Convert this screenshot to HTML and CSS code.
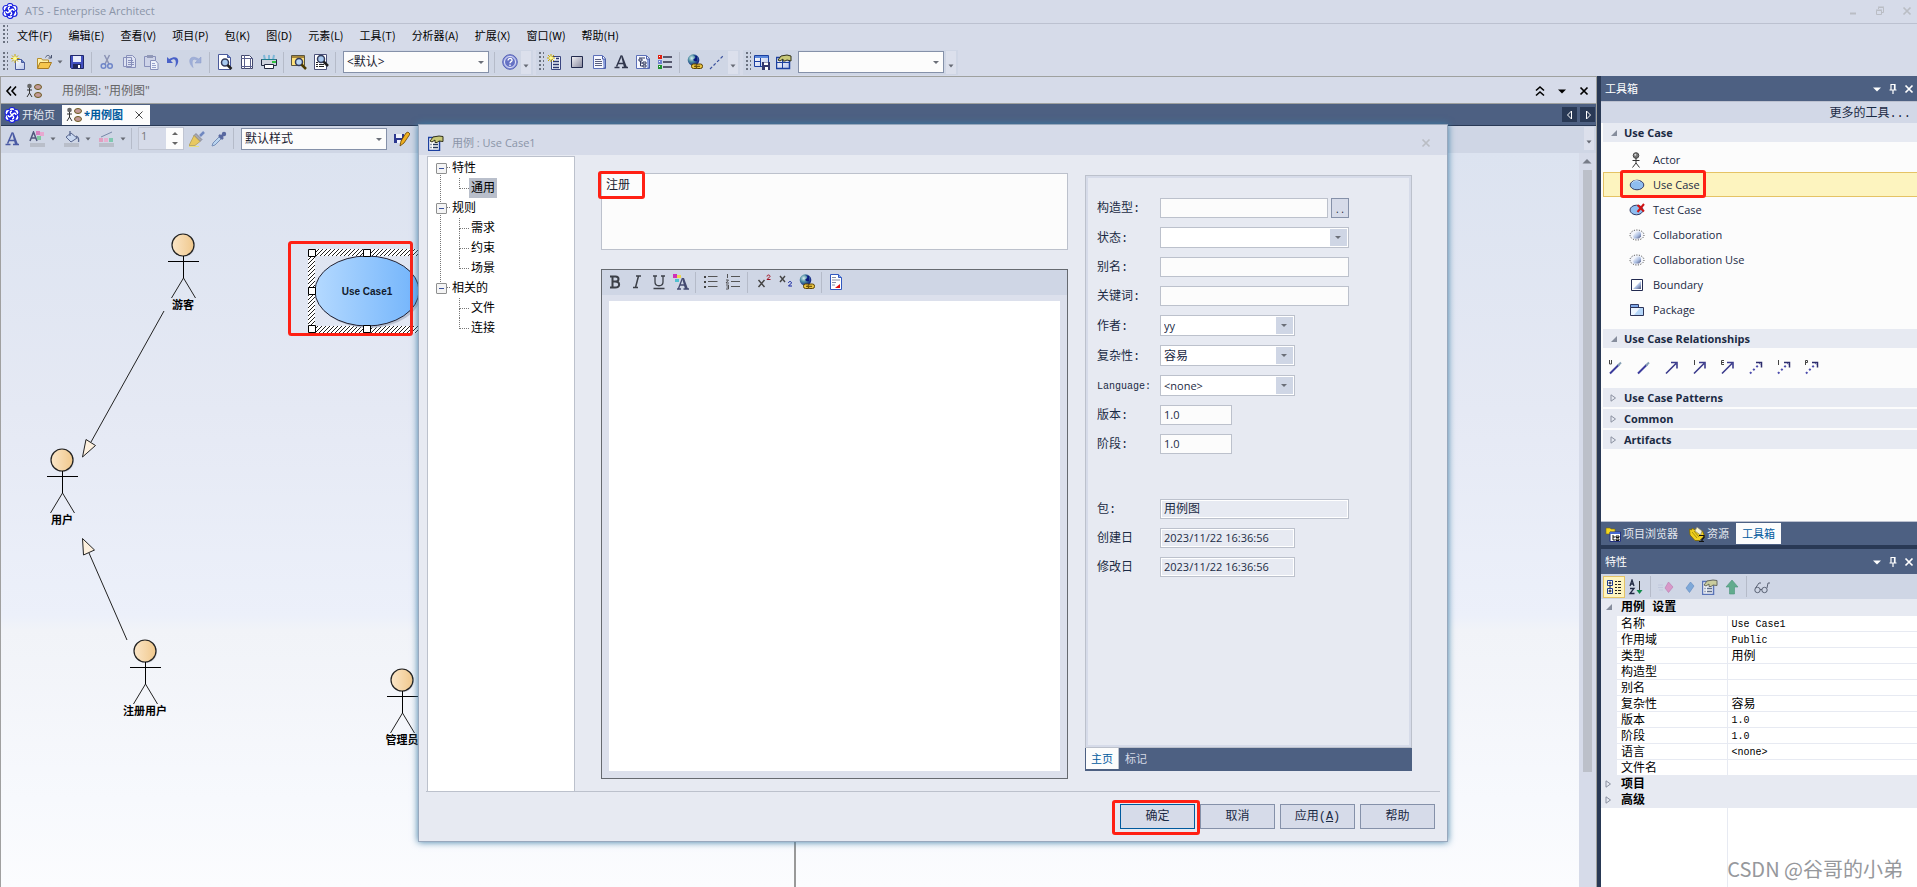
FILE: index.html
```html
<!DOCTYPE html>
<html lang="zh-CN">
<head>
<meta charset="utf-8">
<title>ATS - Enterprise Architect</title>
<link rel="stylesheet" href="styles.css">
</head>
<body>
<svg class="defs" aria-hidden="true">
  <defs>
    <linearGradient id="g-head"><stop offset="0" stop-color="#fbe6c8"/><stop offset="1" stop-color="#f0c88c"/></linearGradient>
    <linearGradient id="g-case"><stop offset="0" stop-color="#b4d9ff"/><stop offset="1" stop-color="#72b4fb"/></linearGradient>
    <linearGradient id="g-box" x2="1" y2="1"><stop offset="0" stop-color="#fff"/><stop offset="1" stop-color="#b9c6ea"/></linearGradient>
    <linearGradient id="g-grey" x2="1" y2="1"><stop offset="0" stop-color="#f4f4f8"/><stop offset="1" stop-color="#85869a"/></linearGradient>
    <linearGradient id="g-shade" x2="1" y2="1"><stop offset=".2" stop-color="#eef3fc"/><stop offset=".6" stop-color="#a9bce0"/><stop offset="1" stop-color="#4a5078"/></linearGradient>
    <radialGradient id="g-globe" cx=".35" cy=".35" r=".7"><stop offset="0" stop-color="#d8f0f0"/><stop offset=".45" stop-color="#4a8aa0"/><stop offset="1" stop-color="#0a1480"/></radialGradient>
    <pattern id="hatch" width="4" height="4" patternUnits="userSpaceOnUse"><rect width="4" height="4" fill="#fff"/><path d="M-1 1l2-2M0 4L4 0M3 5l2-2" stroke="#222"/></pattern>
  </defs>
  <symbol id="i-logo" viewBox="0 0 16 16"><g fill="#fff" stroke="#1b22e0" stroke-width="1.200"><circle cx="8" cy="3.500" r="3"/><circle cx="4" cy="5.500" r="3"/><circle cx="12" cy="5.500" r="3"/><circle cx="4" cy="10.500" r="3"/><circle cx="12" cy="10.500" r="3"/><circle cx="8" cy="12.500" r="3"/></g><circle cx="8" cy="8" r="5.200" fill="#1b22e0"/><path d="M8 4C5.500 4.300 6 6.500 8 8s2.500 3.700 0 4M4 8C4.300 10.500 6.500 10 8 8s3.700-2.500 4 0" fill="none" stroke="#fff" stroke-width="1.400"/></symbol>
  <symbol id="i-new" viewBox="0 0 16 16"><path d="M4.500 5.500h6l3 3v7h-9z" fill="url(#g-box)" stroke="#4a5a9c"/><path d="M10.500 5.500v3h3" fill="#6a8ad0" stroke="#4a5a9c"/><path d="M4 0v9M-.5 4.500h9M1 1.500l6 6M7 1.500l-6 6" stroke="#c9a800"/><circle cx="4" cy="4.500" r="2" fill="#fffb90"/></symbol>
  <symbol id="i-open" viewBox="0 0 16 16"><path d="M1.500 14V4.500h4l1 1.500h6v2" fill="#fff2a8" stroke="#b48d2e"/><path d="M1.500 14.500L4 8.500h11.500l-3 6z" fill="#f6c64c" stroke="#a87a20"/><path d="M9.500 3.500c1.500-3 4-2.500 5 0M15.500 1v3h-3" fill="none" stroke="#4a5470"/></symbol>
  <symbol id="i-save" viewBox="0 0 16 16"><path d="M1.500 1.500h13v13h-12l-1-1z" fill="#4150c0" stroke="#20286c"/><path d="M4 2h8v6H4z" fill="#e8ecfa"/><path d="M4 10h8v4.500H4z" fill="#20285c"/><path d="M9 11h2v3H9z" fill="#fff"/></symbol>
  <symbol id="i-cut" viewBox="0 0 16 16"><path d="M5.500 1l4.500 9M10.500 1L6 10" stroke="#8b93b4" stroke-width="1.500"/><circle cx="4.500" cy="12" r="2.300" fill="none" stroke="#6f86c8" stroke-width="1.500"/><circle cx="11" cy="12" r="2.300" fill="none" stroke="#6f86c8" stroke-width="1.500"/></symbol>
  <symbol id="i-copy" viewBox="0 0 16 16"><path d="M2.500 3.500h8v9h-8zM5.500 1.500h6l3 3v9h-9z" fill="#dde2f2" stroke="#8890ba"/><path d="M7 6.500h5M7 8.500h6M7 10.500h6" stroke="#8890ba"/></symbol>
  <symbol id="i-paste" viewBox="0 0 16 16"><path d="M1.500 2.500h11v10h-11z" fill="#cdd3e8" stroke="#8890ba"/><path d="M4 1h6v3H4z" fill="#9098b8"/><path d="M7.500 6.500h5l2.500 3v6H7.500z" fill="#eef1fa" stroke="#8890ba"/><path d="M9 9.500h3M9 11.500h4M9 13.500h4" stroke="#98a2cc"/></symbol>
  <symbol id="i-undo" viewBox="0 0 16 16"><path d="M2 3v6h6L5.800 6.800C9 3.500 12.500 5.500 10 13.500 16 8 13.500-.5 4.200 5z" fill="#4a62c8"/></symbol>
  <symbol id="i-redo" viewBox="0 0 16 16"><path d="M14 3v6H8l2.200-2.200C7 3.500 3.500 5.500 6 13.500 0 8 2.500-.5 11.800 5z" fill="#a0b0d8" stroke="#8a9aca" stroke-width=".5"/></symbol>
  <symbol id="i-preview" viewBox="0 0 16 16"><path d="M1.500.5h9l3 3v12h-12z" fill="#fff" stroke="#4a5a9c"/><path d="M10.500.5v3h3" fill="#6a8ad0" stroke="#4a5a9c"/><circle cx="8" cy="8.500" r="3.500" fill="#a9cbf0" stroke="#333b5c" stroke-width="1.500"/><path d="M10.500 11l4 4" stroke="#222" stroke-width="2.500"/></symbol>
  <symbol id="i-page" viewBox="0 0 16 16"><path d="M2.500 1.500h8l3 3v10h-11z" fill="#fff" stroke="#42486c"/><path d="M5.500 1v14M2 4.500h12M11.500 4v11M2 12.500h12" stroke="#5a608c"/></symbol>
  <symbol id="i-print" viewBox="0 0 16 16"><path d="M4 6L3 1M8 6V1M12 6l1-5" stroke="#7fb8d8" stroke-width="2"/><path d="M.5 5.500h15v6H.5z" fill="#cfd4de" stroke="#222a40"/><path d="M3.500 10.500h9v4h-9z" fill="#fff" stroke="#222a40"/><path d="M11 7h4v2h-4z" fill="#30c040"/><path d="M1 5.500h14" stroke="#208090"/></symbol>
  <symbol id="i-findbox" viewBox="0 0 16 16"><path d="M.5 1.500h13v10H.5z" fill="#ffe27a" stroke="#5a5440"/><path d="M1 2h12v2H1z" fill="#a8883a"/><circle cx="8" cy="8" r="3.500" fill="#b9d6f4" stroke="#333b5c" stroke-width="1.500"/><path d="M10.500 10.500l4.500 4.500" stroke="#4a3a00" stroke-width="2.500"/></symbol>
  <symbol id="i-finddoc" viewBox="0 0 16 16"><path d="M1.500.5h12v15h-12z" fill="#fff" stroke="#4a5078"/><path d="M3 10.500h2M6 10.500h5M3 12.500h2M6 12.500h5M3 8.500h2" stroke="#222"/><circle cx="8" cy="5" r="3.500" fill="#a9cbf0" stroke="#333b5c" stroke-width="1.500"/><path d="M10.500 7.500l4.500 4.500" stroke="#222" stroke-width="2.500"/></symbol>
  <symbol id="i-help" viewBox="0 0 16 16"><circle cx="8" cy="8" r="7.300" fill="#8c97dc" stroke="#5560b4"/><circle cx="8" cy="8" r="5.500" fill="#6672c4" stroke="#e3e7fa"/><path d="M6 6.500c0-3 4.500-2.500 4 0-.3 1.200-2 1.200-2 2.700M8 10.500v1.500" fill="none" stroke="#fff" stroke-width="1.300"/></symbol>
  <symbol id="i-newlist" viewBox="0 0 16 16"><path d="M4.500 2.500h9v13h-9z" fill="#eef1fb" stroke="#3a4680"/><path d="M9 4.500h3M6 7.500h6M6 10.500h6M6 13.500h6" stroke="#2c3870" stroke-width="1.500"/><path d="M4 0v8M0 4h8M1 1l6 6M7 1L1 7" stroke="#c9a800"/><circle cx="4" cy="4" r="1.800" fill="#fffb90"/></symbol>
  <symbol id="i-square" viewBox="0 0 16 16"><path d="M2.500 2.500h11v11h-11z" fill="url(#g-grey)" stroke="#222a4c"/></symbol>
  <symbol id="i-doc" viewBox="0 0 16 16"><path d="M2.500 1.500h9l3 3v10h-12z" fill="#f6f8ff" stroke="#5b6fb8"/><path d="M11.500 2v3h3v9h-2" fill="#8ca0dc" stroke="#4a5ea8"/><path d="M4 5.500h6M4 7.500h7M4 9.500h7M4 11.500h7" stroke="#5a6080"/></symbol>
  <symbol id="i-a" viewBox="0 0 16 16"><path d="M8.300 1.500L3.600 12.500M5 9.500h5.500M1.500 13.500h5M9 13.500h6" fill="none" stroke="#30364c" stroke-width="1.500"/><path d="M8 1.500h1.500l4.500 12h-3z" fill="#30364c"/></symbol>
  <symbol id="i-abig" viewBox="0 0 16 16"><path d="M8.300 1.500L3.600 12.500M5 9.500h5.500M1.500 13.500h5M9 13.500h6" fill="none" stroke="#4a5aa4" stroke-width="1.500"/><path d="M8 1.500h1.500l4.500 12h-3z" fill="#4a5aa4"/></symbol>
  <symbol id="i-tree" viewBox="0 0 16 16"><path d="M1.500 1.500h10l3 3v10h-13z" fill="#f6f8ff" stroke="#5b6fb8"/><path d="M11.500 2v3h3v9h-2" fill="#8ca0dc" stroke="#4a5ea8"/><path d="M4 5h3v2H4zM8 8h3v2H8zM8 11h3v2H8zM5.500 7v5H8M5.500 9H8M4 4h6" fill="none" stroke="#333a60"/></symbol>
  <symbol id="i-legend" viewBox="0 0 16 16"><path d="M1 1h4v4H1z" fill="#e02010"/><path d="M1 6h4v4H1z" fill="#7080d0"/><path d="M1 11h4v4H1z" fill="#209030"/><path d="M2 2h1v1H2zM2 7h1v1H2zM2 12h1v1H2z" fill="#fff"/><path d="M6 3h9M6 8h9M6 13h9" stroke="#303048" stroke-width="1.500"/></symbol>
  <symbol id="i-globe" viewBox="0 0 16 16"><circle cx="6.500" cy="6" r="5.800" fill="url(#g-globe)"/><path d="M6 1c3 1 3 3 1 4s1 3 3 2V2z" fill="#0a1880"/><rect x="4.500" y="10" width="6.500" height="4.500" rx="2" fill="#e9c240" stroke="#5c4300"/><rect x="9" y="10" width="6.500" height="4.500" rx="2" fill="#e9c240" stroke="#5c4300"/><path d="M7 12.300h6" stroke="#5c4300"/></symbol>
  <symbol id="i-dash" viewBox="0 0 16 16"><path d="M1 15L15 1" stroke="#39509c" stroke-width="1.200" stroke-dasharray="3 2"/></symbol>
  <symbol id="i-winsave" viewBox="0 0 16 16"><path d="M.5 1.500h14v11H.5z" fill="url(#g-box)" stroke="#1c40a0"/><path d="M1 2h13v2H1z" fill="#5b88dc"/><path d="M6.500 4v9M1 7.500h5" stroke="#1c40a0"/><path d="M8 8h8v8H8z" fill="#34386c"/><path d="M10 8.500h4V11h-4zM11 13h3v3h-3z" fill="#fff"/></symbol>
  <symbol id="i-winhand" viewBox="0 0 16 16"><path d="M.5 3.500h13v11H.5z" fill="url(#g-box)" stroke="#1c40a0" stroke-width="1.500"/><path d="M6.500 6v8M1 8.500h12" stroke="#1c40a0"/><path d="M2 6l3-4 6-1 4 1v5l-4-1-2 1H7V5L4 7z" fill="#c8c878" stroke="#30301a"/></symbol>
  <symbol id="i-prop" viewBox="0 0 16 16"><path d="M.5 2.500h11v13H.5z" fill="#fff" stroke="#1c40a0" stroke-width="1.500"/><path d="M2.500 9.500h1M5 9.500h5M2.500 12.500h1M5 12.500h5" stroke="#24385c" stroke-width="1.500"/><path d="M2 6l3-4 6-1 4 .5v5L11 6 9 7.500H7V5L4 7z" fill="#c8c878" stroke="#30301a"/></symbol>
  <symbol id="i-diagram" viewBox="0 0 16 16"><circle cx="3.500" cy="3" r="2.300" fill="#666"/><path d="M3.500 5v5M1 7h5M3.500 10L1 14M3.500 10L6 14" fill="none" stroke="#333"/><ellipse cx="12" cy="4" rx="3.500" ry="2.500" fill="#c49a98" stroke="#6b5a20"/><ellipse cx="12" cy="12" rx="3.500" ry="2.500" fill="#c49a98" stroke="#6b5a20"/></symbol>
  <symbol id="i-actor" viewBox="0 0 16 16"><circle cx="7" cy="3.500" r="2.800" fill="#777" stroke="#444"/><circle cx="6.300" cy="2.800" r="1" fill="#ddd"/><path d="M7 6v5M3.500 8.500h7M7 11l-3.500 4.500M7 11l3.500 4.500" fill="none" stroke="#333"/></symbol>
  <symbol id="i-case" viewBox="0 0 16 16"><ellipse cx="8" cy="8" rx="6.800" ry="4.800" fill="#8fbdf0" stroke="#333c66"/><path d="M3 6c2-3 6-3 8-1" fill="none" stroke="#cde3fb"/></symbol>
  <symbol id="i-test" viewBox="0 0 16 16"><ellipse cx="7.500" cy="8" rx="6.500" ry="4.800" fill="#8fbdf0" stroke="#333c66"/><path d="M8.500 3l6.500 6.500M15 2L8.500 10" stroke="#d01414" stroke-width="2"/></symbol>
  <symbol id="i-collab" viewBox="0 0 16 16"><ellipse cx="8" cy="8" rx="7" ry="5" fill="#f3f5fb" stroke="#333" stroke-dasharray="1 1.500"/><path d="M7 4.500h4l1 2v3l-2 2H5L4 9z" fill="url(#g-shade)"/></symbol>
  <symbol id="i-bound" viewBox="0 0 16 16"><path d="M2.500 2.500h11v11h-11z" fill="#fff" stroke="#222a50"/><path d="M4 12l8-8v8z" fill="url(#g-shade)"/></symbol>
  <symbol id="i-pack" viewBox="0 0 16 16"><path d="M1.500 2.500h8v3h-8z" fill="#7fa8e8" stroke="#333c66"/><path d="M1.500 5.500h13v8h-13z" fill="#b5d6f8" stroke="#2c3358"/><path d="M2 6h9l-6 7H2z" fill="#eef6ff"/></symbol>
  <symbol id="i-line" viewBox="0 0 16 16"><path d="M2 14.500l9-9" stroke="#3c3c9c" stroke-width="2"/><path d="M10 6.500l3-3" stroke="#86a0b4" stroke-width="2"/></symbol>
  <symbol id="i-arrow" viewBox="0 0 16 16"><path d="M2 14.500L12 4.500M7 3.500h6v6" fill="none" stroke="#3c3c8c" stroke-width="1.600"/></symbol>
  <symbol id="i-darrow" viewBox="0 0 16 16"><path d="M2 14.500L12 4.500" stroke="#4c4cac" stroke-width="2" stroke-dasharray="2 2.500"/><path d="M8 3.500h5.500v5" fill="none" stroke="#2c2c6c" stroke-width="1.500"/></symbol>
  <symbol id="i-u" viewBox="0 0 16 16"><path d="M1.500 1v4h2V1" fill="none" stroke="#444"/></symbol>
  <symbol id="i-i" viewBox="0 0 16 16"><path d="M2.500 1v5" stroke="#444"/></symbol>
  <symbol id="i-e" viewBox="0 0 16 16"><path d="M4 1.500H1.500v4H4M1.500 3.500H4" fill="none" stroke="#444"/></symbol>
  <symbol id="i-p" viewBox="0 0 16 16"><path d="M1.500 6V1.500h2v2h-2" fill="none" stroke="#444"/></symbol>
  <symbol id="i-down" viewBox="0 0 16 16"><path d="M4 6.500h8L8 10.500z" fill="currentColor"/></symbol>
  <symbol id="i-small" viewBox="0 0 16 16"><path d="M5.500 6.500h5L8 9.500z" fill="#666a74"/></symbol>
  <symbol id="i-pin" viewBox="0 0 16 16"><path d="M6 9V3.500h4V9M9.500 3v6M4.500 9h7M8 9v4" fill="none" stroke="currentColor" stroke-width="1.200"/></symbol>
  <symbol id="i-x" viewBox="0 0 16 16"><path d="M4.500 4.500l7 7M11.500 4.500l-7 7" stroke="currentColor" stroke-width="1.700"/></symbol>
  <symbol id="i-restore" viewBox="0 0 16 16"><path d="M6.500 6V4.500h5v5H10M6 4h6M4.500 7.500h5v4h-5zM4 7h6" fill="none" stroke="currentColor"/></symbol>
  <symbol id="i-left2" viewBox="0 0 16 16"><path d="M7 3.500L3 8l4 4.500M12 3.500L8 8l4 4.500" fill="none" stroke="#000" stroke-width="1.600"/></symbol>
  <symbol id="i-up2" viewBox="0 0 16 16"><path d="M4 7.500L8 4l4 3.500M4 12.500L8 9l4 3.500" fill="none" stroke="#000" stroke-width="1.600"/></symbol>
  <symbol id="i-fonts" viewBox="0 0 16 16"><path d="M1 10L4.500 1 8 10M2.500 7h4" fill="none" stroke="#50587c" stroke-width="1.500"/><path d="M7 0h4v4H7z" fill="#d880c0"/><path d="M11 1h4v4h-4z" fill="#e8a8d0"/><path d="M8 5h4v4H8z" fill="#80c8a0"/><path d="M1 12h15v4H1z" fill="#b9bec9"/></symbol>
  <symbol id="i-fill" viewBox="0 0 16 16"><path d="M2 6l5-4 6 5-6 4z" fill="#c9d8f0" stroke="#5a6890"/><path d="M6 0v5M12 5c3 1 3 3 2.500 6" fill="none" stroke="#5a6890" stroke-width="1.300"/><path d="M0 12h15v4H0z" fill="#b9bec9"/></symbol>
  <symbol id="i-pen" viewBox="0 0 16 16"><path d="M2 6l11-5" stroke="#7888a8"/><path d="M0 7h4v4H0z" fill="#e0a0c0"/><path d="M5 7h4v4H5z" fill="#e8b0d0"/><path d="M10 7h4v4h-4z" fill="#80c8b0"/><path d="M0 12h15v4H0z" fill="#b9bec9"/></symbol>
  <symbol id="i-brush" viewBox="0 0 16 16"><path d="M15 1l-4 4" stroke="#7088c0" stroke-width="2.500"/><path d="M7 2.500l6 6-2 2-6-6z" fill="#a8a8b0" stroke="#6a6a78" stroke-width=".6"/><path d="M5 4.500l6 6-5 4H0z" fill="#e8c860" stroke="#a89040" stroke-width=".6"/><path d="M0 15.500h10" stroke="#e8e080"/></symbol>
  <symbol id="i-drop" viewBox="0 0 16 16"><path d="M1 15l1-3 6-6 2 2-6 6z" fill="#b9d4f0" stroke="#7890b8"/><path d="M8 4l4 4M10 6l3.500-3.500" stroke="#5868a0" stroke-width="2.500"/><circle cx="13" cy="3" r="2.200" fill="#5868a0"/></symbol>
  <symbol id="i-savepen" viewBox="0 0 16 16"><path d="M0 3h10v9H0z" fill="#2c3890"/><path d="M2 3h6v4H2zM3 9h4v3H3z" fill="#f0f2fa"/><path d="M14 1l2 2-6 9-4 3 1-5 5-8z" fill="#f0b020" stroke="#6a4400" stroke-width=".8"/></symbol>
  <symbol id="i-browser" viewBox="0 0 16 16"><path d="M1 2h4l1 1h4v5H1z" fill="#f4d820" stroke="#7a6a10" stroke-width=".6"/><path d="M5 6h10.500v9.500H5z" fill="#fff" stroke="#223080"/><path d="M5 6h10v2H5z" fill="#4468d0"/><path d="M8 9v5h2M8 11h2M11 10h3v1.500h-3zM11 13h3v1.500h-3z" fill="none" stroke="#111"/></symbol>
  <symbol id="i-res" viewBox="0 0 16 16"><path d="M.5 3l2 1 1-2 2 2 2-2 6 3 2 5-5 4.500H6L1 9z" fill="#f0d020" stroke="#7a6400" stroke-width=".8"/><path d="M8 1l5 4-1.500 4L6 5z" fill="#f6f3d0" stroke="#777" stroke-width=".6"/><path d="M3 6l5 6M5 5l5 6" stroke="#8a7400" stroke-width=".7"/><path d="M10 9.500h5v2l-2 2v2M10 15.500h5" fill="none" stroke="#111" stroke-width="1.200"/></symbol>
  <symbol id="i-cat" viewBox="0 0 16 16"><path d="M1.500 1.500h5v5h-5zM1.500 9.500h5v5h-5z" fill="#fff" stroke="#1c3c90"/><path d="M2.500 4h3M4 2.500v3M2.500 12h3M4 10.500v3M4 7v2" stroke="#111"/><path d="M9 2.500h2M12 2.500h3M9 5.500h2M12 5.500h3M9 8.500h2M12 8.500h3M9 11.500h2M12 11.500h3M9 14.500h2M12 14.500h3" stroke="#222"/></symbol>
  <symbol id="i-az" viewBox="0 0 16 16"><path d="M2 7l2-6 2 6M2.500 5h3M2 9.500h4l-4 5h4.500" fill="none" stroke="#222a44" stroke-width="1.300"/><path d="M11.500 2v10" stroke="#333"/><path d="M8.500 11h6l-3 4z" fill="#108a4a"/></symbol>
  <symbol id="i-pink" viewBox="0 0 16 16"><path d="M0 6h5M0 8.500h5M1 11h4" stroke="#c0c8dc"/><path d="M10.500 3L15 8l-4.500 5.500L7 9z" fill="#d898c8" stroke="#b878b0" stroke-width=".6"/></symbol>
  <symbol id="i-blue" viewBox="0 0 16 16"><path d="M10.500 3L14 7l-4.500 6.500L6 9z" fill="#7ea8d8" stroke="#6088c0" stroke-width=".6"/></symbol>
  <symbol id="i-up" viewBox="0 0 16 16"><path d="M8 1l6 7h-3.500v7h-5V8H2z" fill="#62ab8d" stroke="#4c9378" stroke-width=".6"/></symbol>
  <symbol id="i-glass" viewBox="0 0 16 16"><circle cx="3.500" cy="11" r="2.700" fill="none" stroke="#5a6274"/><circle cx="10.500" cy="11" r="2.700" fill="none" stroke="#5a6274"/><path d="M1.500 9L5 4h2M13 9l1-5h2M6 10.500h2" fill="none" stroke="#5a6274"/></symbol>
  <symbol id="i-b" viewBox="0 0 16 16"><path d="M3 2.500h5.500c4 0 4 5 0 5H6M8 7.500c5.500 0 5.500 6 0 6H3M5.500 2v12" fill="none" stroke="#3c4048" stroke-width="2"/></symbol>
  <symbol id="i-it" viewBox="0 0 16 16"><path d="M7 2h5M9.500 2l-3 11.500M4 13.500h5" fill="none" stroke="#3c4048" stroke-width="1.500"/></symbol>
  <symbol id="i-un" viewBox="0 0 16 16"><path d="M2 2h4M10 2h4M4 2v6c0 5 8 5 8 0V2M2.500 14.500h11" fill="none" stroke="#3c4048" stroke-width="1.300"/></symbol>
  <symbol id="i-colora" viewBox="0 0 16 16"><path d="M0 0h4v4H0z" fill="#d030b8"/><path d="M4 1h4v3H4z" fill="#f0d850"/><path d="M2 5h4v3H2z" fill="#50c0d0"/><path d="M9.500 4L5.500 14.500M7 11h6M4 15h4M10.500 15H16" stroke="#444a70" stroke-width="1.300"/><path d="M9 4h2l4 11h-3z" fill="#444a70"/></symbol>
  <symbol id="i-ul" viewBox="0 0 16 16"><path d="M1 2h2v2H1zM1 7h2v2H1zM1 12h2v2H1z" fill="#444"/><path d="M5 2.500h9.500M5 7.500h9.500M5 12.500h9.500" stroke="#555"/></symbol>
  <symbol id="i-ol" viewBox="0 0 16 16"><path d="M2.500 0v4M1 6h2.500L1 9h3M1 11h2.500v4H1M1.500 13h2" fill="none" stroke="#444" stroke-width=".9"/><path d="M6 2.500h9M6 7.500h9M6 12.500h9" stroke="#555"/></symbol>
  <symbol id="i-sup" viewBox="0 0 16 16"><path d="M3.500 6l6 7M9.500 6l-6 7" stroke="#444" stroke-width="1.400"/><path d="M12 2.500c0-2 3-2 3 0L12 5.500h3.500" fill="none" stroke="#a01020"/></symbol>
  <symbol id="i-sub" viewBox="0 0 16 16"><path d="M3 2l5 6M8 2L3 8" stroke="#444" stroke-width="1.400"/><path d="M11.500 9c0-2 3-2 3 0l-3 3H15" fill="none" stroke="#1020a0"/></symbol>
  <symbol id="i-docred" viewBox="0 0 16 16"><path d="M1.500.5h8l3 3v12h-11z" fill="#fff" stroke="#3058c0"/><path d="M9.500.5v3h3" fill="#8cb0f0" stroke="#3058c0"/><path d="M3 3.500h4M3 6h8M3 8.500h4M3 11h3" stroke="#8890a8"/><path d="M6 14l5-4v4z" fill="#e01010"/></symbol>
  <symbol id="i-open-tri" viewBox="0 0 8 8"><path d="M7 1v6H1z" fill="#868d9c"/></symbol>
  <symbol id="i-shut-tri" viewBox="0 0 8 8"><path d="M1 .8l4.500 3.200L1 7.200z" fill="none" stroke="#8a90a0"/></symbol>
  <symbol id="person" viewBox="0 0 40 60" overflow="visible"><circle cx="21" cy="13" r="11" fill="#c4c9d6" opacity=".7"/><circle cx="20" cy="12" r="11" fill="url(#g-head)" stroke="#222" stroke-width="1.200"/><path d="M20.500 23v22M5 28.500h31" stroke="#000"/><path d="M20.500 45l-12 20M20.500 45l12 20" stroke="#222"/></symbol>
</svg>

<header class="titlebar">
  <svg class="ic"><use href="#i-logo"/></svg>
  <h1>ATS - Enterprise Architect</h1>
  <div class="winbtns">
    <button aria-label="最小化"><svg class="ic"><path d="M5 10.500h6" stroke="currentColor" stroke-width="2"/></svg></button>
    <button aria-label="还原"><svg class="ic"><use href="#i-restore"/></svg></button>
    <button aria-label="关闭"><svg class="ic"><use href="#i-x"/></svg></button>
  </div>
</header>

<nav class="menubar">
  <span class="grip"></span>
  <button>文件(F)</button><button>编辑(E)</button><button>查看(V)</button><button>项目(P)</button><button>包(K)</button><button>图(D)</button><button>元素(L)</button><button>工具(T)</button><button>分析器(A)</button><button>扩展(X)</button><button>窗口(W)</button><button>帮助(H)</button>
</nav>

<div class="toolbars">
  <div class="strip strip-main">
    <span class="grip"></span>
    <button aria-label="新建"><svg class="ic"><use href="#i-new"/></svg></button>
    <button class="split" aria-label="打开"><svg class="ic"><use href="#i-open"/></svg><svg class="ic"><use href="#i-small"/></svg></button>
    <button aria-label="保存"><svg class="ic"><use href="#i-save"/></svg></button>
    <span class="sep"></span>
    <button aria-label="剪切"><svg class="ic"><use href="#i-cut"/></svg></button>
    <button aria-label="复制"><svg class="ic"><use href="#i-copy"/></svg></button>
    <button aria-label="粘贴"><svg class="ic"><use href="#i-paste"/></svg></button>
    <button aria-label="撤销"><svg class="ic"><use href="#i-undo"/></svg></button>
    <button aria-label="重做"><svg class="ic"><use href="#i-redo"/></svg></button>
    <span class="sep"></span>
    <button aria-label="预览"><svg class="ic"><use href="#i-preview"/></svg></button>
    <button aria-label="页面设置"><svg class="ic"><use href="#i-page"/></svg></button>
    <button aria-label="打印"><svg class="ic"><use href="#i-print"/></svg></button>
    <span class="sep"></span>
    <button aria-label="查找"><svg class="ic"><use href="#i-findbox"/></svg></button>
    <button aria-label="在文档中查找"><svg class="ic"><use href="#i-finddoc"/></svg></button>
    <span class="sep"></span>
    <span class="pick"><select aria-label="透视图"><option>&lt;默认&gt;</option></select></span>
    <span class="sep"></span>
    <button aria-label="帮助"><svg class="ic"><use href="#i-help"/></svg></button>
    <button class="more" aria-label="更多按钮"><svg class="ic"><use href="#i-small"/></svg></button>
  </div>
  <div class="strip">
    <span class="grip"></span>
    <button aria-label="新元素"><svg class="ic"><use href="#i-newlist"/></svg></button>
    <button aria-label="边界"><svg class="ic"><use href="#i-square"/></svg></button>
    <button aria-label="注释"><svg class="ic"><use href="#i-doc"/></svg></button>
    <button aria-label="文本"><svg class="ic"><use href="#i-a"/></svg></button>
    <button aria-label="图注"><svg class="ic"><use href="#i-tree"/></svg></button>
    <button aria-label="图例"><svg class="ic"><use href="#i-legend"/></svg></button>
    <span class="sep"></span>
    <button aria-label="超链接"><svg class="ic"><use href="#i-globe"/></svg></button>
    <button aria-label="注释连接"><svg class="ic"><use href="#i-dash"/></svg></button>
    <button class="more" aria-label="更多按钮"><svg class="ic"><use href="#i-small"/></svg></button>
  </div>
  <div class="strip">
    <span class="grip"></span>
    <button aria-label="保存布局"><svg class="ic"><use href="#i-winsave"/></svg></button>
    <button aria-label="管理布局"><svg class="ic"><use href="#i-winhand"/></svg></button>
    <span class="pick"><select aria-label="布局"><option></option></select></span>
    <button class="more" aria-label="更多按钮"><svg class="ic"><use href="#i-small"/></svg></button>
  </div>
</div>

<main class="work">
  <section class="left">
    <div class="caption">
      <svg class="ic"><use href="#i-left2"/></svg>
      <svg class="ic"><use href="#i-diagram"/></svg>
      <h2>用例图: "用例图"</h2>
      <button aria-label="折叠"><svg class="ic"><use href="#i-up2"/></svg></button>
      <button aria-label="菜单"><svg class="ic"><use href="#i-down"/></svg></button>
      <button aria-label="关闭视图"><svg class="ic"><use href="#i-x"/></svg></button>
    </div>
    <div class="tabs">
      <button class="tab"><svg class="ic"><use href="#i-logo"/></svg>开始页</button>
      <button class="tab on"><svg class="ic"><use href="#i-diagram"/></svg>*用例图<svg class="ic tabx"><path d="M4.500 4.500l7 7M11.500 4.500l-7 7" stroke="#444"/></svg></button>
      <span class="grow"></span>
      <button class="nav" aria-label="上一个标签"><svg class="ic"><path d="M9.500 4v8L5.500 8z" fill="none" stroke="#fff"/></svg></button>
      <button class="nav" aria-label="下一个标签"><svg class="ic"><path d="M6.500 4v8l4-4z" fill="none" stroke="#fff"/></svg></button>
    </div>
    <div class="strip fmt">
      <button aria-label="字体"><svg class="ic"><use href="#i-abig"/></svg></button>
      <button class="split" aria-label="字体颜色"><svg class="ic"><use href="#i-fonts"/></svg><svg class="ic"><use href="#i-small"/></svg></button>
      <button class="split" aria-label="填充颜色"><svg class="ic"><use href="#i-fill"/></svg><svg class="ic"><use href="#i-small"/></svg></button>
      <button class="split" aria-label="线条颜色"><svg class="ic"><use href="#i-pen"/></svg><svg class="ic"><use href="#i-small"/></svg></button>
      <span class="sep"></span>
      <span class="spin"><input aria-label="线宽" value="1"><span class="arrows"><i></i><i></i></span></span>
      <button aria-label="格式刷"><svg class="ic"><use href="#i-brush"/></svg></button>
      <button aria-label="取色器"><svg class="ic"><use href="#i-drop"/></svg></button>
      <span class="sep"></span>
      <span class="pick"><select aria-label="样式"><option>默认样式</option></select></span>
      <button class="savestyle" aria-label="保存样式"><svg class="ic"><use href="#i-savepen"/></svg></button>
      <span class="grow"></span>
      <button class="more" aria-label="更多按钮"><svg class="ic"><use href="#i-small"/></svg></button>
    </div>
    <div class="stage">
      <svg class="diagram" role="img" aria-label="用例图">
        <g transform="translate(-1 -153)">
          <use href="#person" x="163" y="233" width="40" height="60"/><text x="183" y="309">游客</text>
          <use href="#person" x="42" y="448" width="40" height="60"/><text x="62" y="524">用户</text>
          <use href="#person" x="125" y="639" width="40" height="60"/><text x="145" y="715">注册用户</text>
          <use href="#person" x="382" y="668" width="40" height="60"/><text x="402" y="744">管理员</text>
          <path d="M164 311L91 442M127 640L89 553" stroke="#222"/>
          <path d="M86 439.500l9.500 6L82.500 457zM82.500 538.500l12 11.500-11 5z" fill="#fdf0de" stroke="#222"/>
          <path d="M308 249h118v84H308zM315 256v70h104v-70z" fill="url(#hatch)" fill-rule="evenodd"/>
          <ellipse cx="369" cy="293" rx="52" ry="35" fill="#b9c0d0"/>
          <ellipse cx="367" cy="291" rx="52" ry="35" fill="url(#g-case)" stroke="#223"/>
          <text class="case" x="367" y="295">Use Case1</text>
          <path d="M308.500 249.500h7v7h-7zM363.500 249.500h7v7h-7zM308.500 287.500h7v7h-7zM308.500 325.500h7v7h-7zM363.500 325.500h7v7h-7z" fill="#fff" stroke="#000"/>
          <path d="M795 780v200" stroke="#999" stroke-width="2"/>
          <rect x="289.500" y="242.500" width="122" height="92" rx="2" fill="none" stroke="#ff2014" stroke-width="3"/>
        </g>
      </svg>
      <div class="scroll"><svg class="ic"><path d="M3.500 10.500h9L8 6z" fill="#777c88"/></svg><span class="thumb"></span></div>
    </div>
  </section>

  <aside class="right">
    <section class="panel toolbox">
      <header class="head"><h2>工具箱</h2><button aria-label="菜单"><svg class="ic"><use href="#i-down"/></svg></button><button aria-label="固定"><svg class="ic"><use href="#i-pin"/></svg></button><button aria-label="关闭工具箱"><svg class="ic"><use href="#i-x"/></svg></button></header>
      <a class="moretools" href="#tools">更多的工具...</a>
      <div class="boxes" id="tools">
        <button class="group"><svg class="tri"><use href="#i-open-tri"/></svg>Use Case</button>
        <ul class="items">
          <li><button><svg class="ic"><use href="#i-actor"/></svg>Actor</button></li>
          <li class="sel"><button><svg class="ic"><use href="#i-case"/></svg>Use Case</button><span class="mark mark-tool"></span></li>
          <li><button><svg class="ic"><use href="#i-test"/></svg>Test Case</button></li>
          <li><button><svg class="ic"><use href="#i-collab"/></svg>Collaboration</button></li>
          <li><button><svg class="ic"><use href="#i-collab"/></svg>Collaboration Use</button></li>
          <li><button><svg class="ic"><use href="#i-bound"/></svg>Boundary</button></li>
          <li><button><svg class="ic"><use href="#i-pack"/></svg>Package</button></li>
        </ul>
        <button class="group"><svg class="tri"><use href="#i-open-tri"/></svg>Use Case Relationships</button>
        <div class="rels">
          <button aria-label="Use"><svg class="ic"><use href="#i-line"/><use href="#i-u"/></svg></button>
          <button aria-label="Associate"><svg class="ic"><use href="#i-line"/></svg></button>
          <button aria-label="Generalize"><svg class="ic"><use href="#i-arrow"/></svg></button>
          <button aria-label="Include"><svg class="ic"><use href="#i-arrow"/><use href="#i-i"/></svg></button>
          <button aria-label="Extend"><svg class="ic"><use href="#i-arrow"/><use href="#i-e"/></svg></button>
          <button aria-label="Realize"><svg class="ic"><use href="#i-darrow"/></svg></button>
          <button aria-label="Invokes"><svg class="ic"><use href="#i-darrow"/><use href="#i-i"/></svg></button>
          <button aria-label="Precedes"><svg class="ic"><use href="#i-darrow"/><use href="#i-p"/></svg></button>
        </div>
        <button class="group"><svg class="tri"><use href="#i-shut-tri"/></svg>Use Case Patterns</button>
        <button class="group"><svg class="tri"><use href="#i-shut-tri"/></svg>Common</button>
        <button class="group"><svg class="tri"><use href="#i-shut-tri"/></svg>Artifacts</button>
      </div>
      <div class="ptabs">
        <button><svg class="ic"><use href="#i-browser"/></svg>项目浏览器</button>
        <button><svg class="ic"><use href="#i-res"/></svg>资源</button>
        <button class="on">工具箱</button>
      </div>
    </section>
    <section class="panel props">
      <header class="head"><h2>特性</h2><button aria-label="菜单"><svg class="ic"><use href="#i-down"/></svg></button><button aria-label="固定"><svg class="ic"><use href="#i-pin"/></svg></button><button aria-label="关闭特性"><svg class="ic"><use href="#i-x"/></svg></button></header>
      <div class="strip ptools">
        <button class="hot" aria-label="分类"><svg class="ic"><use href="#i-cat"/></svg></button>
        <button aria-label="排序"><svg class="ic"><use href="#i-az"/></svg></button>
        <span class="sep"></span>
        <button aria-label="后退"><svg class="ic"><use href="#i-pink"/></svg></button>
        <button aria-label="前进"><svg class="ic"><use href="#i-blue"/></svg></button>
        <button aria-label="属性"><svg class="ic dim"><use href="#i-prop"/></svg></button>
        <button aria-label="上移"><svg class="ic"><use href="#i-up"/></svg></button>
        <span class="sep"></span>
        <button aria-label="查看"><svg class="ic"><use href="#i-glass"/></svg></button>
      </div>
      <div class="sheet">
        <table>
          <colgroup><col class="c0"><col class="c1"><col></colgroup>
          <tbody>
            <tr class="cat"><th><svg class="tri"><use href="#i-open-tri"/></svg></th><th colspan="2">用例 设置</th></tr>
            <tr><th></th><td>名称</td><td>Use Case1</td></tr>
            <tr><th></th><td>作用域</td><td>Public</td></tr>
            <tr><th></th><td>类型</td><td class="cjk">用例</td></tr>
            <tr><th></th><td>构造型</td><td></td></tr>
            <tr><th></th><td>别名</td><td></td></tr>
            <tr><th></th><td>复杂性</td><td class="cjk">容易</td></tr>
            <tr><th></th><td>版本</td><td>1.0</td></tr>
            <tr><th></th><td>阶段</td><td>1.0</td></tr>
            <tr><th></th><td>语言</td><td>&lt;none&gt;</td></tr>
            <tr><th></th><td>文件名</td><td></td></tr>
            <tr class="cat"><th><svg class="tri"><use href="#i-shut-tri"/></svg></th><th colspan="2">项目</th></tr>
            <tr class="cat"><th><svg class="tri"><use href="#i-shut-tri"/></svg></th><th colspan="2">高级</th></tr>
          </tbody>
        </table>
        <div class="rest"></div>
      </div>
    </section>
  </aside>
</main>

<section class="dialog" role="dialog" aria-labelledby="dlg-title">
  <header class="dlg-head">
    <svg class="ic"><use href="#i-prop"/></svg>
    <h2 id="dlg-title">用例 : Use Case1</h2>
    <button aria-label="关闭对话框"><svg class="ic"><use href="#i-x"/></svg></button>
  </header>
  <div class="dlg-body">
    <ul class="tree">
      <li><button>特性</button><ul><li><button class="cur">通用</button></li></ul></li>
      <li><button>规则</button><ul><li><button>需求</button></li><li><button>约束</button></li><li><button>场景</button></li></ul></li>
      <li><button>相关的</button><ul><li><button>文件</button></li><li><button>连接</button></li></ul></li>
    </ul>
    <div class="mid">
      <div class="namebox"><textarea aria-label="名称">注册</textarea><span class="mark mark-name"></span></div>
      <div class="editor">
        <div class="strip edbar">
          <button aria-label="粗体"><svg class="ic"><use href="#i-b"/></svg></button>
          <button aria-label="斜体"><svg class="ic"><use href="#i-it"/></svg></button>
          <button aria-label="下划线"><svg class="ic"><use href="#i-un"/></svg></button>
          <button aria-label="文字颜色"><svg class="ic"><use href="#i-colora"/></svg></button>
          <span class="sep"></span>
          <button aria-label="项目符号"><svg class="ic"><use href="#i-ul"/></svg></button>
          <button aria-label="编号"><svg class="ic"><use href="#i-ol"/></svg></button>
          <span class="sep"></span>
          <button aria-label="上标"><svg class="ic"><use href="#i-sup"/></svg></button>
          <button aria-label="下标"><svg class="ic"><use href="#i-sub"/></svg></button>
          <button aria-label="链接"><svg class="ic"><use href="#i-globe"/></svg></button>
          <span class="sep"></span>
          <button aria-label="词汇表"><svg class="ic"><use href="#i-docred"/></svg></button>
        </div>
        <textarea class="notes" aria-label="注释"></textarea>
      </div>
    </div>
    <div class="side">
      <form class="form">
        <label for="f1">构造型:</label><div class="w-l"><input id="f1"><button type="button" aria-label="选择构造型">. .</button></div>
        <label for="f2">状态:</label><div class="w-l drop"><select id="f2"><option></option></select></div>
        <label for="f3">别名:</label><div class="w-l"><input id="f3"></div>
        <label for="f4">关键词:</label><div class="w-l"><input id="f4"></div>
        <label for="f5">作者:</label><div class="w-m drop"><select id="f5"><option>yy</option></select></div>
        <label for="f6">复杂性:</label><div class="w-m drop"><select id="f6" class="cjk"><option>容易</option></select></div>
        <label for="f7">Language:</label><div class="w-m drop"><select id="f7"><option>&lt;none&gt;</option></select></div>
        <label for="f8">版本:</label><div class="w-s"><input id="f8" value="1.0"></div>
        <label for="f9">阶段:</label><div class="w-s"><input id="f9" value="1.0"></div>
        <label class="apart" for="f10">包:</label><div class="w-l apart"><input id="f10" class="cjk" value="用例图" readonly></div>
        <label for="f11">创建日</label><div class="w-m"><input id="f11" value="2023/11/22 16:36:56" readonly></div>
        <label for="f12">修改日</label><div class="w-m"><input id="f12" value="2023/11/22 16:36:56" readonly></div>
      </form>
      <div class="sidetabs"><button class="on">主页</button><button>标记</button></div>
    </div>
  </div>
  <footer class="dlg-foot">
    <span class="okwrap"><button class="ok">确定</button><span class="mark mark-ok"></span></span>
    <button>取消</button>
    <button>应用(<u>A</u>)</button>
    <button>帮助</button>
  </footer>
</section>
<p class="watermark">CSDN @谷哥的小弟</p>
</body>
</html>
```
FILE: styles.css
```css
* { box-sizing: border-box; }
body {
  margin: 0;
  height: 100vh;
  display: flex;
  flex-direction: column;
  overflow: hidden;
  background: #d6dbe9;
  color: #1b2230;
  font: 12px/16px "Open Sans", "Noto Sans CJK SC", sans-serif;
}
h1, h2, p, ul { margin: 0; padding: 0; }
h1, h2 { font-size: 12px; font-weight: normal; }
ul { list-style: none; }
button, input, select, textarea { font: inherit; color: inherit; margin: 0; padding: 0; border: 0; background: none; border-radius: 0; outline: 0; }
button { display: flex; align-items: center; white-space: nowrap; }
select { appearance: none; }
textarea { resize: none; }
.defs { position: absolute; width: 0; height: 0; }
.ic { width: 16px; height: 16px; flex: none; display: block; }
.tri { width: 8px; height: 8px; flex: none; }
.grow { flex: 1; }

.titlebar { height: 24px; flex: none; display: flex; align-items: center; gap: 7px; padding: 0 2px 2px; border-bottom: 1px solid #bcc1d0; color: #8b95a8; }
.titlebar h1 { flex: 1; font: 11px/16px "Open Sans", sans-serif; }
.winbtns { display: flex; gap: 11px; color: #babdc4; }

.menubar { height: 24px; flex: none; display: flex; align-items: center; gap: 16px; padding: 0 0 2px 3px; color: #000; font-family: "Noto Sans CJK SC", sans-serif; }
.menubar button { font-size: 11px; }
.menubar .grip { margin-right: -7px; }
.grip { width: 5px; height: 20px; flex: none; background: radial-gradient(circle at 1px 1px, #6b7280 1px, transparent 1px) 0 0 / 4px 4px; }

.toolbars { height: 28px; flex: none; display: flex; align-items: center; gap: 3px; }
.strip { height: 25px; display: flex; align-items: center; background: #cfd6e5; }
.toolbars .strip { padding: 0 2px 0 3px; }
.strip button { width: 22px; height: 22px; flex: none; justify-content: center; }
.strip .split { width: 36px; padding-left: 6px; justify-content: flex-start; }
.strip .more { width: 10px; height: 23px; align-items: flex-end; background: #dce0ec; overflow: hidden; }
.sep { width: 1px; height: 21px; margin: 0 4px 0 3px; flex: none; background: #b5bbc9; }
.pick { position: relative; width: 146px; flex: none; margin: 0 2px 0 3px; }
.pick select { display: block; width: 100%; height: 22px; padding: 0 3px; background: #fcfcfc; border: 1px solid #8591a9; }
.pick::after, .drop::after { content: ""; position: absolute; right: 5px; top: 10px; border: 3px solid transparent; border-top-color: #6b6f78; pointer-events: none; }

.work { flex: 1; min-height: 0; display: flex; background: #293955; }
.left { flex: 1; min-width: 0; display: flex; flex-direction: column; border-left: 1px solid #a0a0a0; border-right: 1px solid #a0a19c; margin-right: 4px; background: #d6dbe9; }
.caption { height: 28px; flex: none; display: flex; align-items: center; gap: 6px; padding: 1px 4px 0 3px; border-top: 1px solid #9fa19f; border-bottom: 1px solid #9fa19f; color: #666; }
.caption .ic:nth-child(2) { margin: 0 14px 0 0; }
.caption h2 { flex: 1; }
.caption button { color: #000; }
.tabs { height: 22px; flex: none; display: flex; align-items: flex-end; padding-right: 1px; background: #4d6082; border-bottom: 1px solid #293955; }
.tab { height: 20px; padding: 0 7px 0 3px; gap: 2px; font-size: 11px; color: #e4e8f0; }
.tab.on { padding: 0 3px 0 4px; background: #fcfcfc; color: #005a9e; font-weight: bold; }
.tabx { margin-left: 6px; }
.nav { width: 15px; height: 15px; justify-content: center; align-self: center; margin-left: 3px; background: #293955; }
.fmt { height: 27px; flex: none; padding: 0 2px 2px 0; }
.fmt .split { width: 35px; }
.spin { display: flex; width: 46px; height: 23px; margin: 0 2px; border: 1px solid #c0c5d2; background: #fcfcfc; }
.spin input { width: 27px; padding: 0 2px 6px; background: #d6dbe9; color: #777; font-size: 11px; }
.arrows { flex: 1; display: flex; flex-direction: column; align-items: center; justify-content: center; gap: 7px; }
.arrows i { border: 3px solid transparent; border-top: 0; border-bottom-color: #666; }
.arrows i + i { border-top: 3px solid #666; border-bottom: 0; }
.savestyle { margin-left: 2px; }
.stage { flex: 1; min-height: 0; display: flex; }
.diagram { flex: 1; min-width: 0; height: 100%; background: linear-gradient(#dce3f0, #e5e9f4 35%, #ecf0fa 63%, #f1f3f8 65%, #f7f9fd 88%, #fbfcfe); }
.diagram text { font: bold 11px "Liberation Sans", "Noto Sans CJK SC", sans-serif; text-anchor: middle; fill: #000; }
.diagram .case { font-size: 10px; fill: #111a2c; }
.scroll { width: 17px; padding-right: 1px; display: flex; flex-direction: column; align-items: center; background: #d6dbe9; }
.thumb { width: 9px; height: 82%; margin-top: 1px; background: #bcc0c9; }

.right { width: 316px; flex: none; display: flex; flex-direction: column; gap: 4px; }
.toolbox { height: 469px; flex: none; display: flex; flex-direction: column; }
.props { flex: 1; min-height: 0; display: flex; flex-direction: column; }
.head { height: 25px; flex: none; display: flex; align-items: center; padding: 0 0 0 4px; background: #4d6082; color: #fff; }
.head h2 { flex: 1; font-size: 11px; }
.moretools { height: 22px; flex: none; padding: 4px 6px 0; border-top: 1px solid #bcc1d0; background: #d2d8e7; color: #1b2a44; text-align: right; text-decoration: none; font: 12px/16px "Liberation Mono", "Noto Sans CJK SC", monospace; }
.boxes { flex: 1; min-height: 0; padding-left: 2px; background: #fcfcfc; border-bottom: 1px solid #bcc1d0; }
.group { width: 100%; height: 19px; margin-bottom: 2px; padding: 0 7px; gap: 6px; background: #e7eaf2; color: #1b2a44; font-weight: bold; font-size: 11px; }
.items { padding: 3px 0 7px; }
.items li { position: relative; height: 25px; display: flex; }
.items button { flex: 1; padding-left: 26px; gap: 8px; color: #1b2a44; font-size: 11px; }
.items .sel { background: #fdf4bf; border: 1px solid #e5c365; border-right: 0; }
.items .sel button { padding-left: 25px; }
.mark { position: absolute; border: 3px solid #ff2014; border-radius: 3px; pointer-events: none; }
.mark-tool { left: 16px; top: -3px; width: 86px; height: 28px; }
.rels { height: 38px; display: flex; align-items: center; gap: 12px; padding: 0 0 4px 5px; }
.ptabs { height: 23px; flex: none; display: flex; align-items: center; background: #4d6082; color: #e4e8f0; font-size: 11px; }
.ptabs button { height: 21px; gap: 2px; padding: 0 7px 0 4px; }
.ptabs .on { background: #fcfcfc; color: #005a9e; padding: 0 6px; }
.ptools { flex: none; padding-left: 2px; }
.ptools .hot { background: #fdf4bf; border: 1px solid #e5c365; }
.dim { opacity: .65; }
.sheet { flex: 1; min-height: 0; display: flex; flex-direction: column; background: #fff; font: 12px/13px "Liberation Mono", "Noto Sans CJK SC", monospace; color: #000; }
.sheet table { width: 100%; border-collapse: collapse; table-layout: fixed; }
.c0 { width: 16px; }
.c1 { width: 110px; }
.sheet tr { height: 16px; }
.sheet td, .sheet th { height: 16px; padding: 3px 4px 0; line-height: 12px; text-align: left; border-bottom: 1px solid #e7eaf2; }
.sheet th:first-child { background: #e7eaf2; }
.sheet td + td { border-left: 1px solid #e7eaf2; font-size: 10px; }
.sheet td.cjk { font-size: 12px; }
.sheet .cat { background: #e7eaf2; }
.rest { flex: 1; width: 127px; border-right: 1px solid #e7eaf2; }

.dialog { position: absolute; left: 418px; top: 124px; right: 469px; bottom: 45px; display: flex; flex-direction: column; background: #e7eaf2; border: 1px solid #98a8bd; box-shadow: 0 0 7px #3b7ba4; }
.dlg-head { height: 30px; flex: none; display: flex; align-items: center; gap: 8px; padding: 6px 13px 0 9px; background: #d6dbe9; color: #8b95a8; }
.dlg-head h2 { flex: 1; font-size: 11px; }
.dlg-head button { color: #babdc4; }
.dlg-body { flex: 1; min-height: 0; display: flex; margin: 0 7px; padding-right: 28px; border-bottom: 1px solid #bcc1cc; }
.tree { width: 148px; flex: none; margin: 1px 0 0 1px; padding: 1px 0 0 8px; background: #fff; border: 1px solid #bcc1cc; border-bottom: 0; color: #000; }
.tree li { position: relative; }
.tree button { height: 20px; }
.tree > li > button { padding-left: 16px; }
.tree > li > button::before { content: ""; position: absolute; z-index: 1; left: 0; top: 5px; width: 9px; height: 9px; border: 1px solid #8e8f8f; border-radius: 1px; background: linear-gradient(#39509c, #39509c) center / 5px 1px no-repeat #f4f4f4; }
.tree > li > button::after { content: ""; position: absolute; left: 10px; top: 9px; width: 4px; border-top: 1px dotted #777; }
.tree > li:not(:last-child)::before { content: ""; position: absolute; left: 4px; top: 10px; bottom: -10px; border-left: 1px dotted #777; }
.tree ul { padding-left: 23px; }
.tree ul li { padding-left: 10px; }
.tree ul li::before { content: ""; position: absolute; left: 0; top: 0; width: 9px; height: 10px; border-left: 1px dotted #777; border-bottom: 1px dotted #777; }
.tree ul li:not(:last-child)::after { content: ""; position: absolute; left: 0; top: 10px; height: 10px; border-left: 1px dotted #777; }
.tree ul button { padding: 0 2px; }
.tree .cur { background: #b9bfcb; }
.mid { flex: 1; min-width: 0; display: flex; flex-direction: column; gap: 19px; padding: 18px 17px 12px 26px; }
.namebox { position: relative; height: 77px; flex: none; }
.namebox textarea { width: 100%; height: 100%; padding: 3px 4px; background: #fcfcfc; border: 1px solid #bcc1cc; }
.mark-name { left: -3px; top: -2px; width: 47px; height: 28px; }
.editor { flex: 1; min-height: 0; display: flex; flex-direction: column; background: #dce0ec; border: 1px solid #666a70; }
.edbar { flex: none; padding: 0 0 1px 2px; }
.notes { flex: 1; margin: 6px 7px 7px; background: #fff; }
.side { width: 327px; flex: none; display: flex; flex-direction: column; padding: 20px 0; }
.form { flex: 1; min-height: 0; display: grid; grid-template-columns: 63px 1fr; align-content: start; row-gap: 9px; padding: 22px 11px; border: 1px solid #bcc1cc; box-shadow: inset 0 0 0 2px #d6dbe9; }
.form label { align-self: center; padding-top: 2px; font-family: "Liberation Mono", "Noto Sans CJK SC", monospace; font-size: 12px; white-space: nowrap; color: #1b2a44; }
.form label[for="f7"] { font-size: 10px; }
.form div { position: relative; display: flex; gap: 3px; height: 20px; }
.form .drop { height: 21px; }
.w-l { width: 189px; }
.w-m { width: 135px; }
.w-s { width: 72px; }
.form input, .form select { flex: 1; min-width: 0; padding: 0 3px; background: #fcfcfc; border: 1px solid #bcc1cc; font-size: 11px; color: #1b2a44; }
.form .cjk { font-size: 12px; }
.form input[readonly] { background: #e7eaf2; box-shadow: inset 0 0 0 1px #fff; }
.form .drop select { background: linear-gradient(#cfd6e5, #cfd6e5) right 1px center / 17px 17px no-repeat #fff; }
.drop::after { right: 8px; top: 9px; }
.form button { width: 18px; justify-content: center; align-items: flex-end; background: #d6dbe9; border: 1px solid #8591a9; font-size: 10px; }
.form .apart { margin-top: 36px; }
.sidetabs { height: 23px; flex: none; display: flex; align-items: flex-start; padding-left: 1px; background: #4d6082; color: #d5dae6; font-size: 11px; }
.sidetabs button { height: 21px; padding: 0 6px; }
.sidetabs .on { padding: 0 5px; background: #fcfcfc; color: #005a9e; border-right: 1px solid #bcc1cc; }
.dlg-foot { height: 49px; flex: none; display: flex; justify-content: flex-end; align-items: flex-start; gap: 5px; padding: 12px 12px 0; }
.dlg-foot button { width: 75px; height: 25px; justify-content: center; background: #d6dbe9; border: 1px solid #8591a9; font-family: "Liberation Mono", "Noto Sans CJK SC", monospace; color: #1b2a44; }
.okwrap { position: relative; }
.okwrap .ok { border-color: #005a9e; }
.mark-ok { left: -8px; top: -4px; width: 88px; height: 35px; }
.watermark { position: absolute; right: 14px; bottom: 5px; font: 20px/26px "Noto Sans CJK SC", sans-serif; color: #96989c; }
```
